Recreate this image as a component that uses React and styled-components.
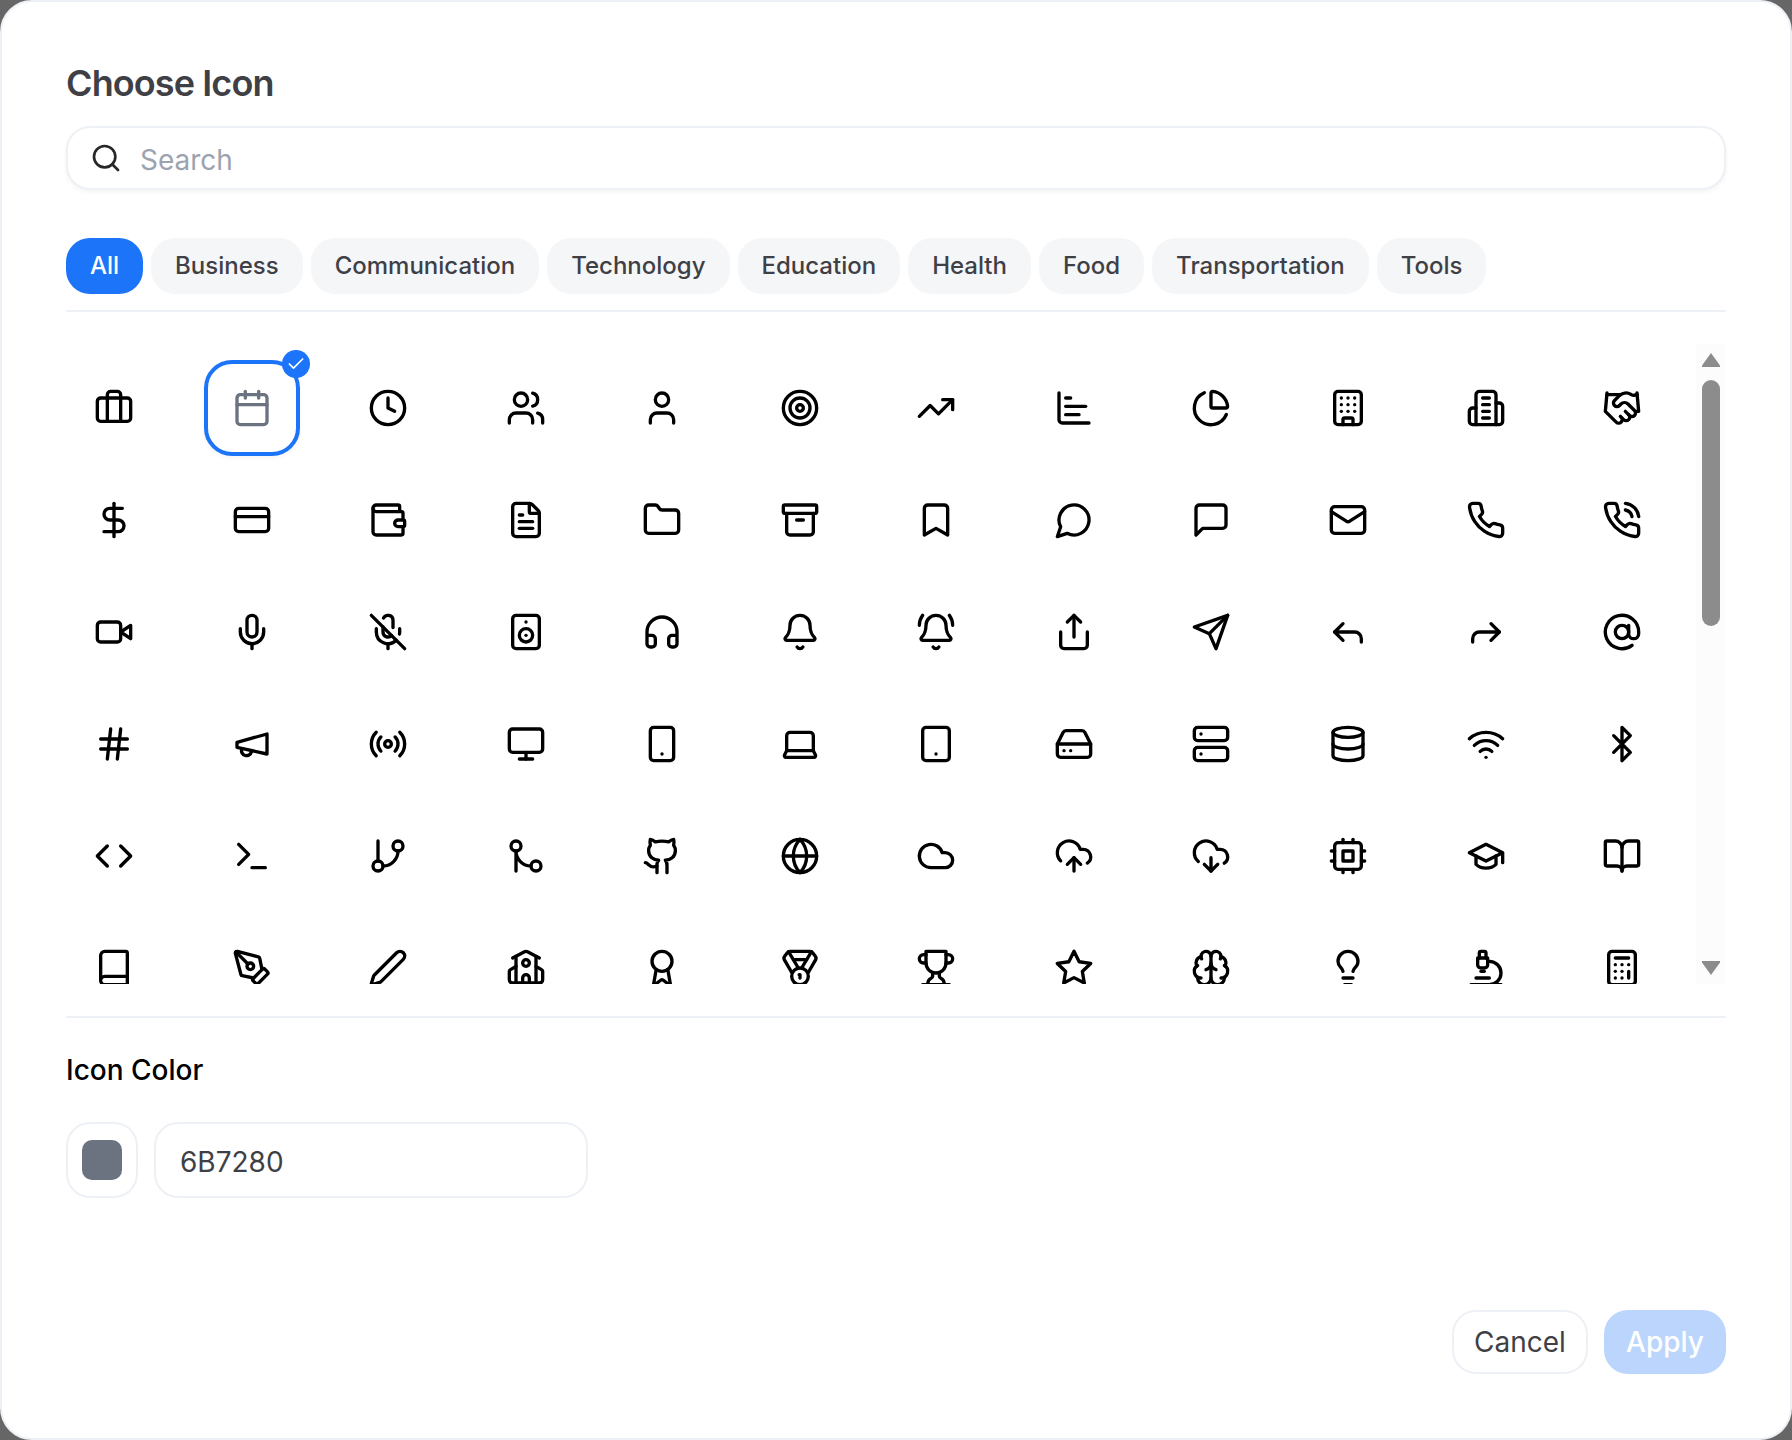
import React from 'react'
import styled, { createGlobalStyle } from 'styled-components'
import {
  Briefcase, Calendar, Clock, Users, User, Target, TrendingUp, ChartBar, ChartPie, Building, Handshake,
  DollarSign, CreditCard, Wallet, FileText, Folder, Archive, Mail,
  Mic, MicOff, Speaker, Headphones, Bell, BellRing, Share, Reply, Forward, AtSign,
  Hash, Radio, Monitor, Smartphone, Tablet, HardDrive, Server, Database, Wifi, Bluetooth,
  Code, Terminal, GitBranch, GitMerge, Github, Globe, Cloud, CloudUpload, CloudDownload, BookOpen,
  PenTool, Pen, School, Award, Medal, Brain, Lightbulb, Microscope, Calculator,
  Search, Check,
} from 'lucide-react'

// older lucide shapes, the installed package has redrawn these
const oldIcon = (...paths) => ({ size = 40 }) => (
  <svg width={size} height={size} viewBox="0 0 24 24" fill="none" stroke="currentColor" strokeWidth="2" strokeLinecap="round" strokeLinejoin="round">
    {paths.map(d => <path key={d} d={d} />)}
  </svg>
)

const PHONE = 'M22 16.92v3a2 2 0 0 1-2.18 2 19.79 19.79 0 0 1-8.63-3.07 19.5 19.5 0 0 1-6-6 19.79 19.79 0 0 1-3.07-8.67A2 2 0 0 1 4.11 2h3a2 2 0 0 1 2 1.72 12.84 12.84 0 0 0 .7 2.81 2 2 0 0 1-.45 2.11L8.09 9.91a16 16 0 0 0 6 6l1.27-1.27a2 2 0 0 1 2.11-.45 12.84 12.84 0 0 0 2.81.7A2 2 0 0 1 22 16.92z'

const Building2 = oldIcon('M6 22V4a2 2 0 0 1 2-2h8a2 2 0 0 1 2 2v18Z', 'M6 12H4a2 2 0 0 0-2 2v6a2 2 0 0 0 2 2h2', 'M18 9h2a2 2 0 0 1 2 2v9a2 2 0 0 1-2 2h-2', 'M10 6h4', 'M10 10h4', 'M10 14h4', 'M10 18h4')
const Bookmark = oldIcon('m19 21-7-4-7 4V5a2 2 0 0 1 2-2h10a2 2 0 0 1 2 2v16z')
const MessageCircle = oldIcon('M7.9 20A9 9 0 1 0 4 16.1L2 22Z')
const MessageSquare = oldIcon('M21 15a2 2 0 0 1-2 2H7l-4 4V5a2 2 0 0 1 2-2h14a2 2 0 0 1 2 2z')
const Phone = oldIcon(PHONE)
const PhoneCall = oldIcon(PHONE, 'M14.05 2a9 9 0 0 1 8 7.94', 'M14.05 6A5 5 0 0 1 18 10')
const Video = oldIcon('m22 8-6 4 6 4V8Z', 'M4 6h10a2 2 0 0 1 2 2v8a2 2 0 0 1-2 2H4a2 2 0 0 1-2-2V8a2 2 0 0 1 2-2Z')
const Send = oldIcon('m22 2-7 20-4-9-9-4Z', 'M22 2 11 13')
const Megaphone = oldIcon('m3 11 18-5v12L3 14v-3z', 'M11.6 16.8a3 3 0 1 1-5.8-1.6')
const Laptop = oldIcon('M20 16V7a2 2 0 0 0-2-2H6a2 2 0 0 0-2 2v9m16 0H4m16 0 1.28 2.55a1 1 0 0 1-.9 1.45H3.62a1 1 0 0 1-.9-1.45L4 16')
const Cpu = oldIcon('M6 4h12a2 2 0 0 1 2 2v12a2 2 0 0 1-2 2H6a2 2 0 0 1-2-2V6a2 2 0 0 1 2-2Z', 'M9 9h6v6H9z', 'M15 2v2', 'M15 20v2', 'M2 15h2', 'M2 9h2', 'M20 15h2', 'M20 9h2', 'M9 2v2', 'M9 20v2')
const GraduationCap = oldIcon('M22 10v6M2 10l10-5 10 5-10 5z', 'M6 12v5c3 3 9 3 12 0v-5')
const Book = oldIcon('M4 19.5v-15A2.5 2.5 0 0 1 6.5 2H19a1 1 0 0 1 1 1v18a1 1 0 0 1-1 1H6.5a2.5 2.5 0 0 1 0-5H20')
const Trophy = oldIcon('M6 9H4.5a2.5 2.5 0 0 1 0-5H6', 'M18 9h1.5a2.5 2.5 0 0 0 0-5H18', 'M4 22h16', 'M10 14.66V17c0 .55-.47.98-.97 1.21C7.85 18.75 7 20.24 7 22', 'M14 14.66V17c0 .55.47.98.97 1.21C16.15 18.75 17 20.24 17 22', 'M18 2H6v7a6 6 0 0 0 12 0V2Z')
const Star = oldIcon('M12 2 15.09 8.26 22 9.27 17 14.14 18.18 21.02 12 17.77 5.82 21.02 7 14.14 2 9.27 8.91 8.26Z')

const icons = [
  Briefcase, Calendar, Clock, Users, User, Target, TrendingUp, ChartBar, ChartPie, Building, Building2, Handshake,
  DollarSign, CreditCard, Wallet, FileText, Folder, Archive, Bookmark, MessageCircle, MessageSquare, Mail, Phone, PhoneCall,
  Video, Mic, MicOff, Speaker, Headphones, Bell, BellRing, Share, Send, Reply, Forward, AtSign,
  Hash, Megaphone, Radio, Monitor, Smartphone, Laptop, Tablet, HardDrive, Server, Database, Wifi, Bluetooth,
  Code, Terminal, GitBranch, GitMerge, Github, Globe, Cloud, CloudUpload, CloudDownload, Cpu, GraduationCap, BookOpen,
  Book, PenTool, Pen, School, Award, Medal, Trophy, Star, Brain, Lightbulb, Microscope, Calculator,
]

const tabs = ['All', 'Business', 'Communication', 'Technology', 'Education', 'Health', 'Food', 'Transportation', 'Tools']

const App = () => (
  <>
    <GlobalStyle />
    <Modal>
      <Title>Choose Icon</Title>
      <SearchBox>
        <Search size={32} color="#27272a" />
        <SearchInput placeholder="Search" readOnly />
      </SearchBox>
      <TabRow>
        {tabs.map((t, i) => <Tab key={t} $active={i === 0}>{t}</Tab>)}
      </TabRow>
      <PickerArea>
        <Viewport>
          <IconGrid>
            {icons.map((Icon, i) => (
              <Tile key={i} $selected={Icon === Calendar}>
                <Icon size={40} />
                {Icon === Calendar && <Badge><Check size={20} /></Badge>}
              </Tile>
            ))}
          </IconGrid>
        </Viewport>
        <ScrollTrack>
          <ArrowUp />
          <ScrollThumb />
          <ArrowDown />
        </ScrollTrack>
      </PickerArea>
      <Label>Icon Color</Label>
      <ColorRow>
        <SwatchBox><Swatch /></SwatchBox>
        <HexInput defaultValue="6B7280" readOnly />
      </ColorRow>
      <Footer>
        <CancelButton>Cancel</CancelButton>
        <ApplyButton>Apply</ApplyButton>
      </Footer>
    </Modal>
  </>
)

export default App

const GlobalStyle = createGlobalStyle`
  html, body {
    margin: 0;
    background: #666;
  }
  * {
    box-sizing: border-box;
  }
`

const Modal = styled.div`
  width: 1792px;
  height: 1440px;
  display: flex;
  flex-direction: column;
  padding: 61px 64px 64px;
  background: #fff;
  border: 2px solid #edf0f5;
  border-radius: 32px;
  font-family: Inter, "Liberation Sans", sans-serif;
  color: #3f3f46;
`

const Title = styled.h2`
  margin: 0 0 23px;
  font-size: 36px;
  line-height: 40px;
  font-weight: 600;
  letter-spacing: -0.9px;
`

const SearchBox = styled.div`
  height: 64px;
  display: flex;
  align-items: center;
  gap: 18px;
  padding: 0 22px;
  border: 2px solid #edf0f5;
  border-radius: 24px;
  box-shadow: 0 2px 4px rgba(0, 0, 0, 0.05);
`

const SearchInput = styled.input`
  flex: 1;
  border: 0;
  outline: 0;
  padding: 3px 0 0;
  font: 400 28px Inter, sans-serif;
  color: #3f3f46;
  &::placeholder {
    color: #9ca3af;
  }
`

const TabRow = styled.div`
  display: flex;
  gap: 8px;
  margin-top: 48px;
  padding-bottom: 16px;
  border-bottom: 2px solid #edf0f5;
`

const Tab = styled.div`
  height: 56px;
  display: flex;
  align-items: center;
  padding: 0 24px 2px;
  border-radius: 24px;
  font-size: 24px;
  font-weight: 500;
  background: ${props => (props.$active ? '#1c74f9' : '#f5f6f8')};
  color: ${props => (props.$active ? '#fff' : '#3f3f46')};
`

const PickerArea = styled.div`
  display: flex;
  height: 674px;
  padding-bottom: 32px;
  margin-top: 32px;
  border-bottom: 2px solid #edf0f5;
`

const Viewport = styled.div`
  flex: 1;
  overflow: hidden;
`

// the columns land on whole css pixels of a 2x screen, so the steps alternate
const IconGrid = styled.div`
  display: grid;
  grid-template-columns: repeat(3, 138px 136px) 138px 137px 137px 138px 136px 96px;
  row-gap: 16px;
  padding-top: 16px;
`

const Tile = styled.div`
  position: relative;
  width: 96px;
  height: 96px;
  display: flex;
  align-items: center;
  justify-content: center;
  border: 4px solid ${props => (props.$selected ? '#1c74f9' : 'transparent')};
  border-radius: 28px;
  color: ${props => (props.$selected ? '#6b7280' : '#000')};
  box-shadow: ${props => (props.$selected ? '0 2px 4px rgba(0, 0, 0, 0.05)' : 'none')};
`

const Badge = styled.span`
  position: absolute;
  top: -14px;
  right: -14px;
  width: 28px;
  height: 28px;
  display: flex;
  align-items: center;
  justify-content: center;
  border-radius: 50%;
  background: #1c74f9;
  color: #fff;
`

const ScrollTrack = styled.div`
  width: 30px;
  display: flex;
  flex-direction: column;
  align-items: center;
  padding: 9px 0;
  background: #fcfcfc;
`

const ArrowUp = styled.div`
  width: 18px;
  height: 14px;
  background: #8c8c8c;
  clip-path: polygon(50% 0, 100% 90%, 100% 100%, 0 100%, 0 90%);
`

const ArrowDown = styled.div`
  width: 18px;
  height: 14px;
  margin-top: auto;
  background: #8c8c8c;
  clip-path: polygon(0 0, 100% 0, 100% 10%, 50% 100%, 0 10%);
`

const ScrollThumb = styled.div`
  width: 18px;
  height: 246px;
  margin-top: 13px;
  border-radius: 9px;
  background: #8c8c8c;
`

const Label = styled.div`
  margin-top: 35px;
  font-size: 28px;
  line-height: 34px;
  font-weight: 500;
  color: #000;
`

const ColorRow = styled.div`
  display: flex;
  gap: 16px;
  margin-top: 35px;
`

const SwatchBox = styled.div`
  width: 72px;
  height: 76px;
  display: flex;
  align-items: center;
  justify-content: center;
  border: 2px solid #edf0f5;
  border-radius: 24px;
`

const Swatch = styled.div`
  width: 40px;
  height: 40px;
  border-radius: 10px;
  background: #6b7280;
`

const HexInput = styled.input`
  width: 434px;
  height: 76px;
  padding: 4px 24px 0;
  border: 2px solid #edf0f5;
  border-radius: 24px;
  outline: 0;
  font: 400 28px Inter, sans-serif;
  color: #3f3f46;
`

const Footer = styled.div`
  display: flex;
  justify-content: flex-end;
  gap: 16px;
  margin-top: auto;
`

const CancelButton = styled.button`
  width: 136px;
  height: 64px;
  border: 2px solid #edf0f5;
  border-radius: 24px;
  background: #fff;
  font: 400 28px Inter, sans-serif;
  color: #3f3f46;
`

const ApplyButton = styled.button`
  width: 122px;
  height: 64px;
  border: 0;
  border-radius: 24px;
  background: #bbd5fc;
  font: 500 28px Inter, sans-serif;
  color: #fff;
`
